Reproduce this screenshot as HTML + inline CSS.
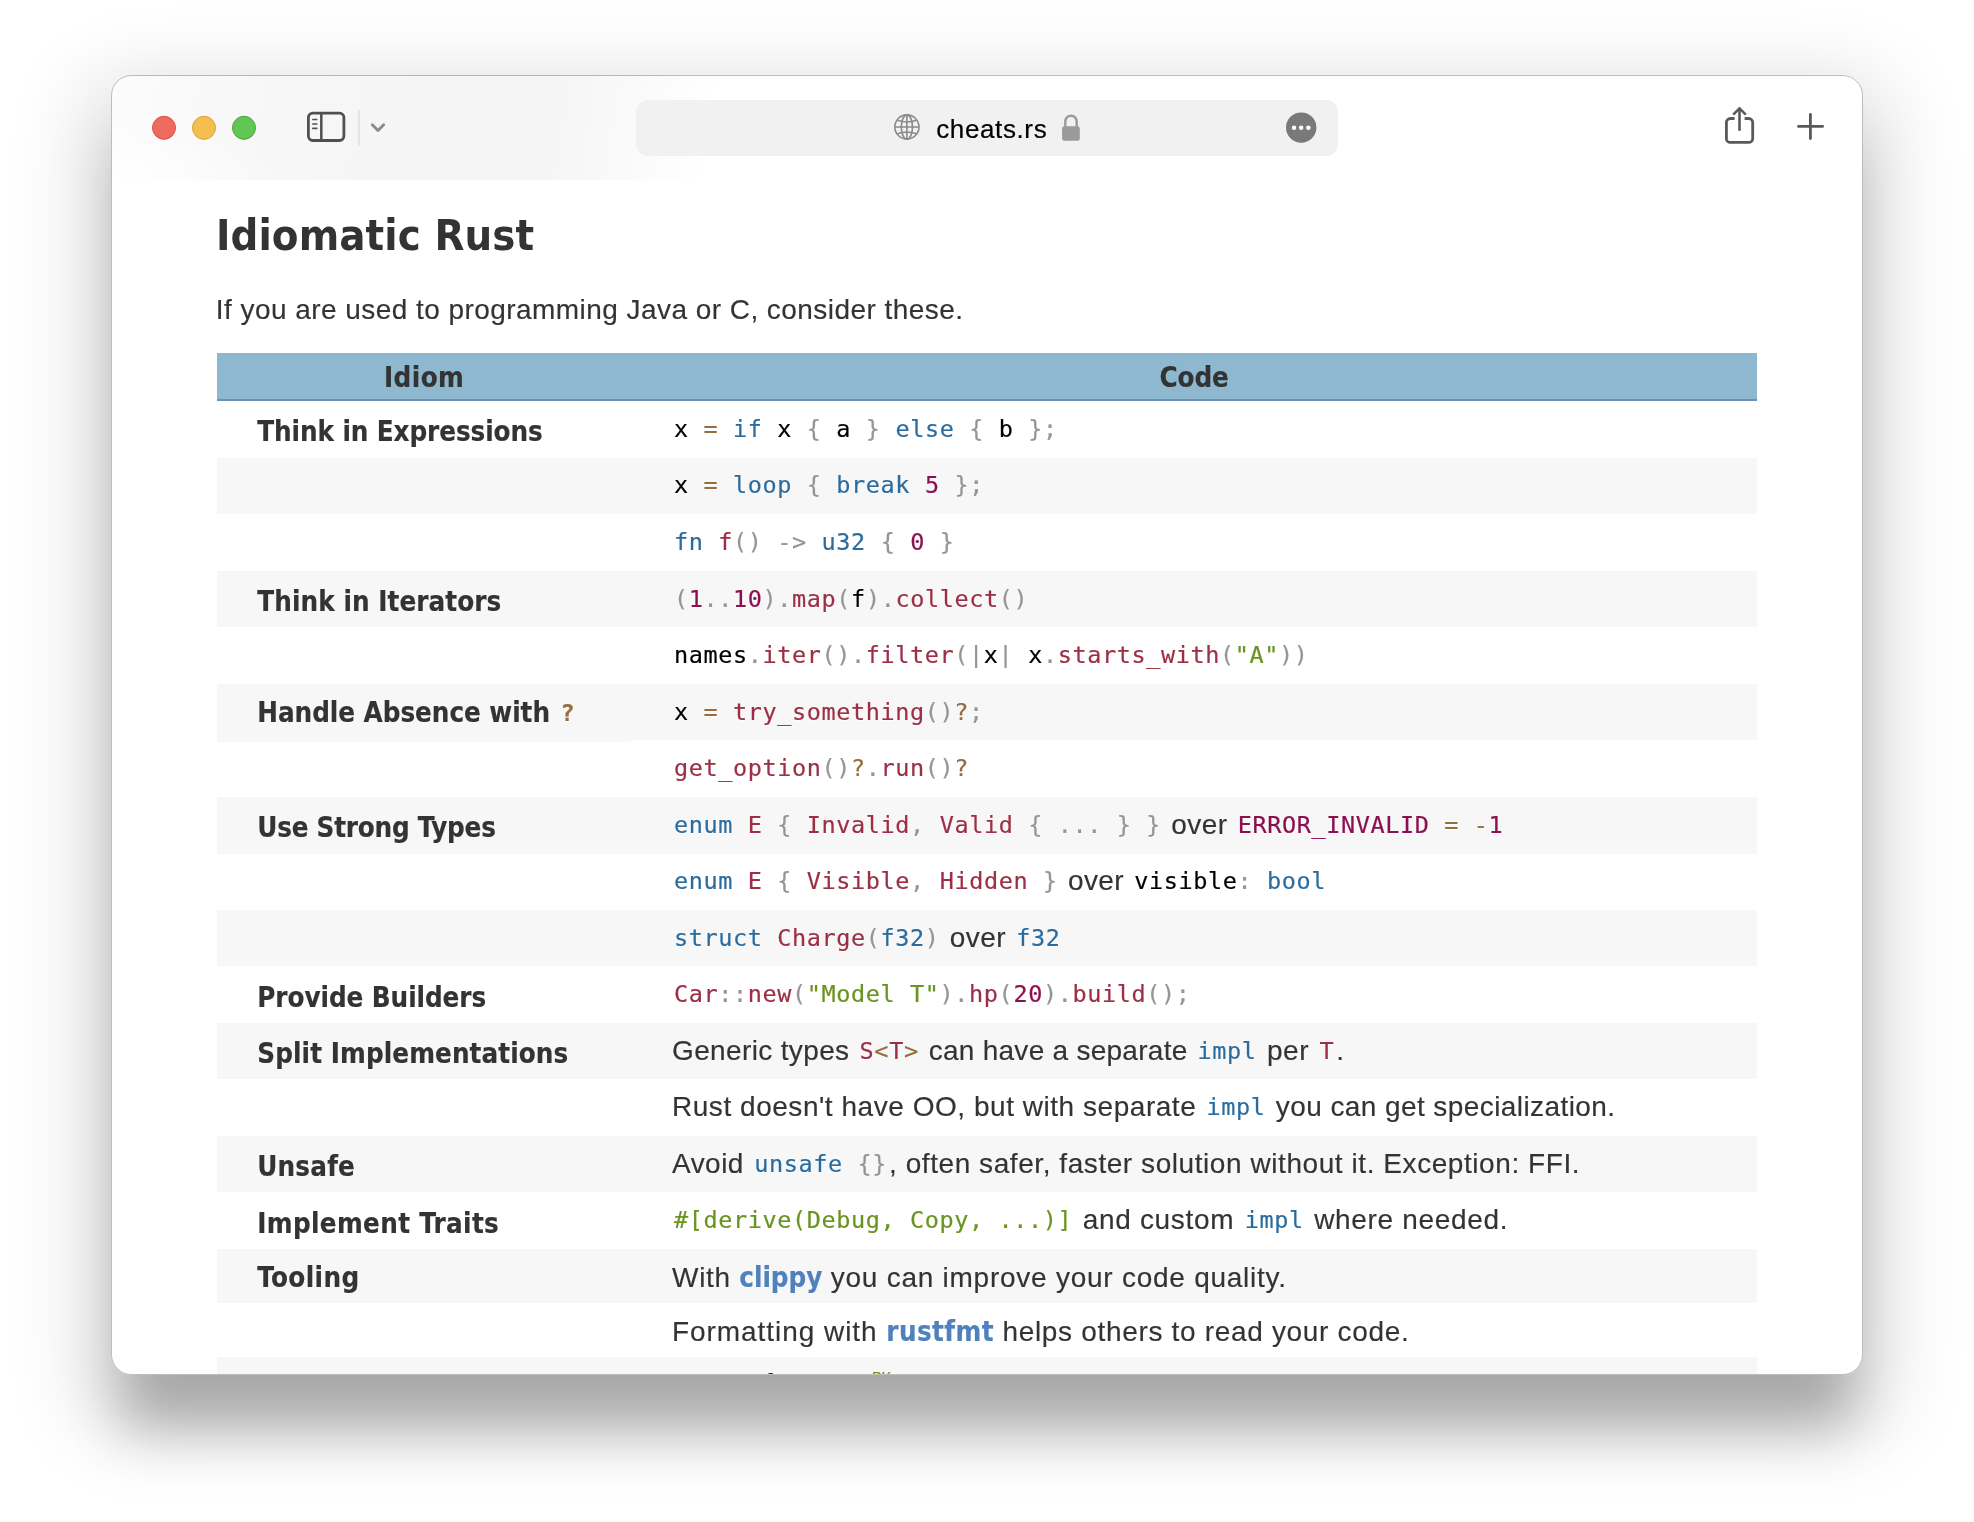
<!DOCTYPE html>
<html lang="en"><head><meta charset="utf-8"><title>cheats.rs</title>
<style>
html,body{margin:0;padding:0}
body{width:1974px;height:1522px;background:#fff;overflow:hidden;position:relative;font-family:"Liberation Sans",sans-serif;color:#333}
.win{position:absolute;left:112px;top:75px;width:1750px;height:1299px;border-radius:20px;background:#fff;overflow:hidden}
.shadow{position:absolute;left:111.3px;top:75px;width:1751.5px;height:1300px;border-radius:20.5px;box-shadow:0 63.6px 54px -11.9px rgba(0,0,0,.253),0 29.8px 77px 28.2px rgba(0,0,0,.126)}
.frame{position:absolute;left:111.3px;top:75px;width:1751.5px;height:1300px;box-sizing:border-box;border-radius:20.5px;border:1px solid rgba(0,0,0,.26);pointer-events:none}
.bar{will-change:transform;position:absolute;left:0;top:0;width:1750px;height:105px;background:radial-gradient(ellipse 170px 60px at 0 105px,#fff 0,rgba(255,255,255,0) 100%),linear-gradient(100deg,#fcfcfc 0,#f8f8f8 110px,#f5f5f5 300px,#f5f5f5 440px,#fff 600px)}
.bar svg{position:absolute;left:0;top:0}
.url{position:absolute;left:524px;top:25px;width:702px;height:56px;border-radius:12px;background:#f1f1f1}
.host{-webkit-text-stroke:.2px;position:absolute;left:824.2px;top:39.3px;font-size:26px;line-height:30px;color:#000;white-space:pre}
.page{will-change:transform;position:absolute;left:0;top:105px;width:1750px;height:1194px;overflow:hidden}
h2{position:absolute;left:103.9px;top:28.5px;margin:0;font-size:44px;line-height:52px;font-weight:700;color:#333;white-space:pre}
.intro{-webkit-text-stroke:.15px;position:absolute;left:103.8px;top:108.6px;margin:0;font-size:28px;line-height:42px;white-space:pre}
.tbl{-webkit-text-stroke:.15px;position:absolute;left:105px;top:173px;width:1540px;height:1100px;font-size:28px;line-height:42px}
.th{position:absolute;left:0;top:0;width:1540px;height:46px;background:#8db8cf;border-bottom:2px solid #6b8fb5;font-weight:700}
.th span{position:absolute;top:3.1px;text-align:center;white-space:pre}
.th .h1{left:0;width:414.3px}
.th .h2{left:414.3px;width:1125.7px}
.th span span{position:static}
.tr{position:absolute;left:0;width:1540px}
.tr.odd{background:#f7f7f7}
.c1,.c2{position:absolute;white-space:pre}
.c1{left:40.3px;top:9.3px}
.c2{left:455px;top:6.6px}
.tt .c1{top:6.6px}
.ha .c1{top:7.05px}
code{font-family:"DejaVu Sans Mono","Liberation Mono",monospace;font-size:23.5px;letter-spacing:.602px;line-height:1;color:#000;padding:0 2px;position:relative;top:-.8px;-webkit-text-stroke:.2px;text-shadow:0 1px #fff}
code.b{font-weight:700}
.k{color:#2b6c9f}.f{color:#9c2f46}.p{color:#959595}.o{color:#966d3f}.n{color:#8c1050}.s,.a{color:#6a9420}.c{color:#8c1050}
a{color:#4f81be;font-weight:700}
strong{font-weight:700}
sup{font-size:15px;color:#690;line-height:1;vertical-align:baseline;position:relative;top:-13px}
.bd{font-family:"DejaVu Sans Condensed","DejaVu Sans","Liberation Sans",sans-serif;font-weight:700}
code.lift{top:-3.2px}
.ha::before{content:"";position:absolute;left:0;top:0;width:414.3px;height:57.4px;background:#f7f7f7}
</style></head>
<body>
<div class="shadow"></div>
<div class="win">
<div class="bar">
<div class="url"></div>
<svg width="1750" height="105" viewBox="112 75 1750 105" fill="none">
<circle cx="164" cy="127.8" r="11.5" fill="#ed6a5f" stroke="#d8503f" stroke-width="1"/>
<circle cx="204" cy="127.8" r="11.5" fill="#f5bf4f" stroke="#d9a033" stroke-width="1"/>
<circle cx="244" cy="127.8" r="11.5" fill="#62c655" stroke="#48a43a" stroke-width="1"/>
<g stroke="#505050" stroke-width="2.8" stroke-linecap="round">
<rect x="308.4" y="113.1" width="35.5" height="27.4" rx="4.4"/>
<path d="M321.3 113.5V140.2" stroke-width="2.5"/>
<path d="M312.9 119.5H316.7M312.9 124H316.7M312.9 128.4H316.7" stroke-width="1.7"/>
</g>
<path d="M359 110V145.7" stroke="#e2e2e2" stroke-width="1.8"/>
<path d="M372.3 124.8L378 130.6L383.7 124.8" stroke="#8a8a8e" stroke-width="2.8" stroke-linecap="round" stroke-linejoin="round"/>
<g stroke="#8a8a8a" stroke-width="1.6">
<circle cx="906.9" cy="127" r="12.1"/>
<ellipse cx="906.9" cy="127" rx="5.6" ry="12.1"/>
<path d="M906.9 114.9V139.1M894.8 127H919M897.3 120.3Q906.9 123.6 916.5 120.3M897.3 133.7Q906.9 130.4 916.5 133.7"/>
</g>
<rect x="1062.1" y="126.2" width="17.7" height="14.5" rx="2.2" fill="#9a9a9a"/>
<path d="M1065.3 127V121.5a5.7 5.7 0 0 1 11.4 0V127" stroke="#9a9a9a" stroke-width="2.4"/>
<circle cx="1301.2" cy="127.6" r="15.2" fill="#797979"/>
<circle cx="1294" cy="127.7" r="2.25" fill="#fff"/><circle cx="1301.2" cy="127.7" r="2.25" fill="#fff"/><circle cx="1308.4" cy="127.7" r="2.25" fill="#fff"/>
<g stroke="#595959" stroke-width="2.8" stroke-linecap="round" stroke-linejoin="round">
<path d="M1734.6 118.5H1730.4a4 4 0 0 0 -4 4V138.4a4 4 0 0 0 4 4H1748.7a4 4 0 0 0 4 -4V122.5a4 4 0 0 0 -4 -4H1744.6" stroke-linecap="butt"/>
<path d="M1739.5 108.8V129.7" stroke-width="2.6"/>
<path d="M1733.2 114.7L1739.5 108.4L1745.8 114.7" stroke-width="2.6" stroke-linecap="butt" stroke-linejoin="round"/>
<path d="M1798.5 126.4H1822.6M1810.4 114.4V138.6"/>
</g>
</svg>
<div class="host"><span style="letter-spacing:0.622px">cheats.rs</span></div>
</div>
<div class="page">
<h2><span class="bd" style="font-size:43.21px;letter-spacing:0.112px">Idiomatic Rust</span></h2>
<p class="intro"><span style="letter-spacing:0.448px">If you are used to programming Java or C, consider these.</span></p>
<div class="tbl">
<div class="th"><span class="h1"><span class="bd" style="font-size:27.50px;letter-spacing:0.438px">Idiom</span></span><span class="h2"><span class="bd" style="font-size:27.50px;letter-spacing:-0.054px">Code</span></span></div>
<div class="tr cc" style="top:48.0px;height:56.6px"><div class="c1"><strong><span class="bd" style="font-size:27.50px;letter-spacing:-0.094px">Think in Expressions</span></strong></div><div class="c2"><code>x <span class="o">=</span> <span class="k">if</span> x <span class="p">{</span> a <span class="p">}</span> <span class="k">else</span> <span class="p">{</span> b <span class="p">};</span></code></div></div>
<div class="tr odd cc" style="top:104.6px;height:56.6px"><div class="c1"></div><div class="c2"><code>x <span class="o">=</span> <span class="k">loop</span> <span class="p">{</span> <span class="k">break</span> <span class="n">5</span> <span class="p">};</span></code></div></div>
<div class="tr cc" style="top:161.2px;height:56.6px"><div class="c1"></div><div class="c2"><code><span class="k">fn</span> <span class="f">f</span><span class="p">()</span> <span class="p">-&gt;</span> <span class="k">u32</span> <span class="p">{</span> <span class="n">0</span> <span class="p">}</span></code></div></div>
<div class="tr odd cc" style="top:217.8px;height:56.6px"><div class="c1"><strong><span class="bd" style="font-size:27.50px;letter-spacing:0.073px">Think in Iterators</span></strong></div><div class="c2"><code><span class="p">(</span><span class="n">1</span><span class="p">..</span><span class="n">10</span><span class="p">).</span><span class="f">map</span><span class="p">(</span>f<span class="p">).</span><span class="f">collect</span><span class="p">()</span></code></div></div>
<div class="tr cc" style="top:274.4px;height:56.8px"><div class="c1"></div><div class="c2"><code>names<span class="p">.</span><span class="f">iter</span><span class="p">().</span><span class="f">filter</span><span class="p">(|</span>x<span class="p">|</span> x<span class="p">.</span><span class="f">starts_with</span><span class="p">(</span><span class="s">&quot;A&quot;</span><span class="p">))</span></code></div></div>
<div class="tr odd cc ha" style="top:331.2px;height:55.6px"><div class="c1"><strong><span class="bd" style="font-size:27.50px;letter-spacing:-0.038px">Handle Absence with </span><code class="b"><span class="o">?</span></code></strong></div><div class="c2"><code>x <span class="o">=</span> <span class="f">try_something</span><span class="p">()</span><span class="o">?</span><span class="p">;</span></code></div></div>
<div class="tr cc" style="top:386.8px;height:57.4px"><div class="c1"></div><div class="c2"><code><span class="f">get_option</span><span class="p">()</span><span class="o">?</span><span class="p">.</span><span class="f">run</span><span class="p">()</span><span class="o">?</span></code></div></div>
<div class="tr odd cc" style="top:444.2px;height:56.4px"><div class="c1"><strong><span class="bd" style="font-size:27.50px;letter-spacing:-0.227px">Use Strong Types</span></strong></div><div class="c2"><code><span class="k">enum</span> <span class="f">E</span> <span class="p">{</span> <span class="f">Invalid</span><span class="p">,</span> <span class="f">Valid</span> <span class="p">{</span> <span class="p">...</span> <span class="p">}</span> <span class="p">}</span></code><span style="letter-spacing:0.432px"> over </span><code><span class="c">ERROR_INVALID</span> <span class="o">=</span> <span class="o">-</span><span class="n">1</span></code></div></div>
<div class="tr cc" style="top:500.6px;height:56.6px"><div class="c1"></div><div class="c2"><code><span class="k">enum</span> <span class="f">E</span> <span class="p">{</span> <span class="f">Visible</span><span class="p">,</span> <span class="f">Hidden</span> <span class="p">}</span></code><span style="letter-spacing:0.432px"> over </span><code>visible<span class="p">:</span> <span class="k">bool</span></code></div></div>
<div class="tr odd cc" style="top:557.2px;height:56.3px"><div class="c1"></div><div class="c2"><code><span class="k">struct</span> <span class="f">Charge</span><span class="p">(</span><span class="k">f32</span><span class="p">)</span></code><span style="letter-spacing:0.432px"> over </span><code><span class="k">f32</span></code></div></div>
<div class="tr cc" style="top:613.5px;height:56.6px"><div class="c1"><strong><span class="bd" style="font-size:27.50px;letter-spacing:-0.066px">Provide Builders</span></strong></div><div class="c2"><code><span class="f">Car</span><span class="p">::</span><span class="f">new</span><span class="p">(</span><span class="s">&quot;Model T&quot;</span><span class="p">).</span><span class="f">hp</span><span class="p">(</span><span class="n">20</span><span class="p">).</span><span class="f">build</span><span class="p">();</span></code></div></div>
<div class="tr odd cc" style="top:670.1px;height:56.4px"><div class="c1"><strong><span class="bd" style="font-size:27.50px;letter-spacing:0.089px">Split Implementations</span></strong></div><div class="c2"><span style="letter-spacing:0.362px">Generic types </span><code><span class="f">S</span><span class="o">&lt;</span><span class="f">T</span><span class="o">&gt;</span></code><span style="letter-spacing:0.267px"> can have a separate </span><code><span class="k">impl</span></code><span style="letter-spacing:0.562px"> per </span><code><span class="f">T</span></code><span style="letter-spacing:-0.330px">.</span></div></div>
<div class="tr cc" style="top:726.5px;height:56.7px"><div class="c1"></div><div class="c2"><span style="letter-spacing:0.535px">Rust doesn&#x27;t have OO, but with separate </span><code><span class="k">impl</span></code><span style="letter-spacing:0.417px"> you can get specialization.</span></div></div>
<div class="tr odd cc" style="top:783.2px;height:56.3px"><div class="c1"><strong><span class="bd" style="font-size:27.50px;letter-spacing:0.185px">Unsafe</span></strong></div><div class="c2"><span style="letter-spacing:0.474px">Avoid </span><code><span class="k">unsafe</span> <span class="p">{}</span></code><span style="letter-spacing:0.566px">, often safer, faster solution without it. Exception: FFI.</span></div></div>
<div class="tr cc" style="top:839.5px;height:56.7px"><div class="c1"><strong><span class="bd" style="font-size:27.50px;letter-spacing:0.346px">Implement Traits</span></strong></div><div class="c2"><code><span class="a">#[derive(Debug, Copy, ...)]</span></code><span style="letter-spacing:0.678px"> and custom </span><code><span class="k">impl</span></code><span style="letter-spacing:0.671px"> where needed.</span></div></div>
<div class="tr odd tt" style="top:896.2px;height:53.8px"><div class="c1"><strong><span class="bd" style="font-size:27.50px;letter-spacing:0.385px">Tooling</span></strong></div><div class="c2"><span style="letter-spacing:0.713px">With </span><a><span class="bd" style="font-size:27.50px;letter-spacing:-0.053px">clippy</span></a><span style="letter-spacing:0.748px"> you can improve your code quality.</span></div></div>
<div class="tr tt" style="top:950.0px;height:54.2px"><div class="c1"></div><div class="c2"><span style="letter-spacing:0.943px">Formatting with </span><a><span class="bd" style="font-size:27.50px;letter-spacing:0.419px">rustfmt</span></a><span style="letter-spacing:0.677px"> helps others to read your code.</span></div></div>
<div class="tr odd tt" style="top:1004.2px;height:53.8px"><div class="c1"></div><div class="c2"><span style="letter-spacing:0.425px">Add </span><strong><span class="bd" style="font-size:27.50px;letter-spacing:-0.060px">unit tests</span></strong><span style="letter-spacing:-0.508px"> </span><sup><span style="letter-spacing:-0.545px">BK</span></sup><span style="letter-spacing:-0.775px"> (</span><code class="lift"><span class="a">#[test]</span></code><span style="letter-spacing:0.611px">) to ensure your code works.</span></div></div>
</div>
</div>
</div>
<div class="frame"></div>
</body></html>
